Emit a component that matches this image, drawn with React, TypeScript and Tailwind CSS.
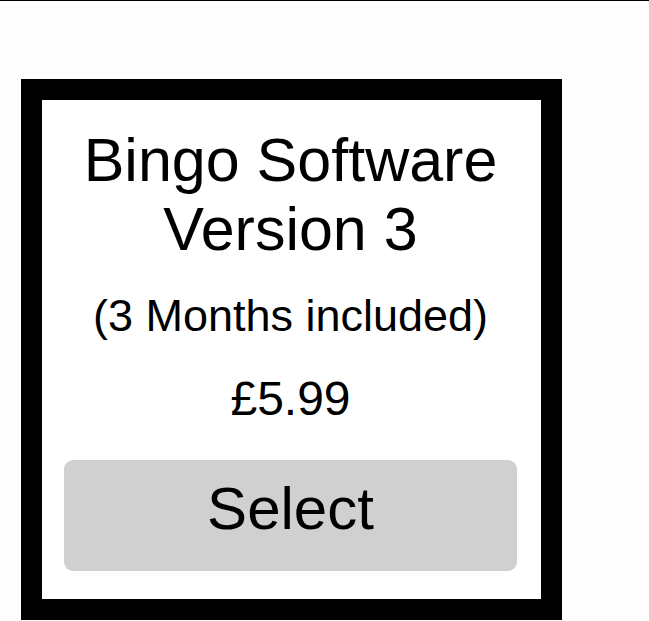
import React from 'react';

export default function App() {
  return (
    <div className="min-h-[621px] w-[649px] bg-[#fefefe] font-['Liberation_Sans',Arial,sans-serif] text-black">
      {/* thin rule along the top edge */}
      <div className="h-px w-full bg-black" />

      <div className="pl-[21px] pt-[78px]">
        <div className="w-[541px] h-[541px] border-[21px] border-black bg-white pt-[26px] pl-[22px]">
          <div className="flex w-[453px] flex-col items-center text-center">
            <h1 className="text-[61px] leading-[69px] font-normal">
              Bingo Software
              <br />
              Version 3
            </h1>
            <p className="mt-[26px] text-[45px] leading-[51px]">(3 Months included)</p>
            <p className="mt-[30px] text-[48px] leading-[55px]">£5.99</p>
            <button className="mt-[34px] flex h-[111px] w-[453px] items-center justify-center rounded-[9px] bg-[#d0d0d0] pb-[14px] text-[60px] leading-none">
              Select
            </button>
          </div>
        </div>
      </div>
    </div>
  );
}
